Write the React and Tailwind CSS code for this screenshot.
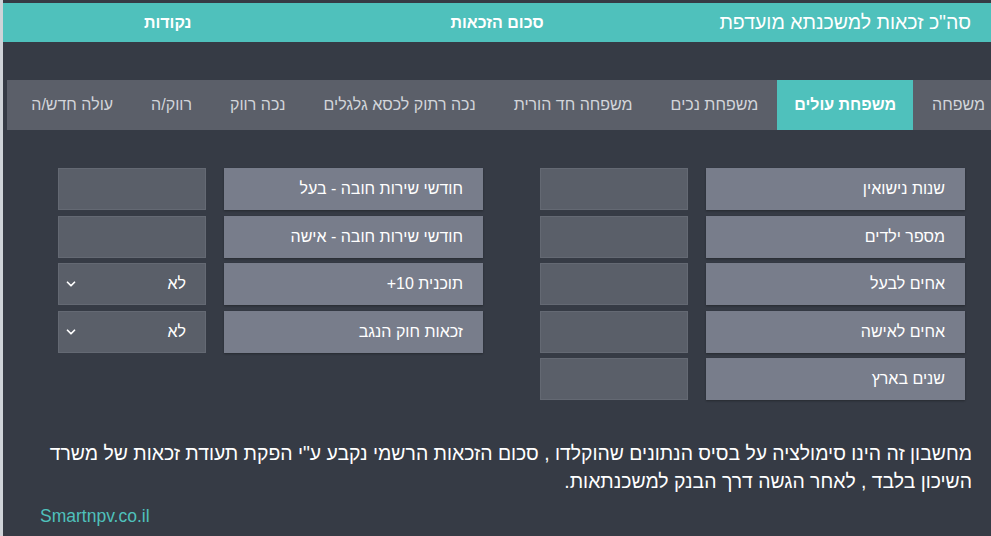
import { ChevronDown } from "lucide-react";

const tabs = [
  "משפחה",
  "משפחת עולים",
  "משפחת נכים",
  "משפחה חד הורית",
  "נכה רתוק לכסא גלגלים",
  "נכה רווק",
  "רווק/ה",
  "עולה חדש/ה",
];

const rightRows = ["שנות נישואין", "מספר ילדים", "אחים לבעל", "אחים לאישה", "שנים בארץ"];

const leftRows = [
  { label: "חודשי שירות חובה - בעל" },
  { label: "חודשי שירות חובה - אישה" },
  { label: "תוכנית 10+", select: true },
  { label: "זכאות חוק הנגב", select: true },
];

function Row({ label, select }) {
  return (
    <div className="flex h-[42px] items-center gap-[18px]">
      <div className="flex h-full w-[259px] items-center bg-[#787d8b] pr-5 text-[16px] text-white shadow-[0_1px_2px_rgba(0,0,0,0.3)]">
        {label}
      </div>
      {select ? (
        <div className="flex h-full w-[148px] items-center justify-between border border-[#646973] bg-[#5a5f69] pl-[5px] pr-[19px] text-[16px] text-white">
          <span>לא</span>
          <ChevronDown size={14} strokeWidth={3} className="text-white" />
        </div>
      ) : (
        <div className="h-full w-[148px] border border-[#646973] bg-[#5a5f69]" />
      )}
    </div>
  );
}

export default function App() {
  return (
    <div
      dir="rtl"
      className="h-[536px] w-[991px] overflow-hidden border-l-[3px] border-[#cfd3d8] bg-[#363b45] pt-[3px] font-['Liberation_Sans',Arial,sans-serif]"
    >
      <div className="grid h-[39px] grid-cols-3 items-center bg-[#4fc1bc] text-white">
        <div className="pr-[20px] text-[19.5px]">סה"כ זכאות למשכנתא מועדפת</div>
        <div className="text-center text-[16px] font-bold">סכום הזכאות</div>
        <div className="text-center text-[16px] font-bold">נקודות</div>
      </div>

      <div className="ml-[4px] mt-[38px] flex h-[50px] items-stretch overflow-hidden bg-[#5b5f69]">
        {tabs.map((t, i) => (
          <div
            key={t}
            className={
              i === 1
                ? "flex shrink-0 items-center bg-[#4fc1bc] px-[17px] text-[16px] font-bold text-white"
                : i === 0
                ? "flex shrink-0 items-center pl-[19px] pr-[6px] text-[16px] text-[#d2d5da]"
                : "flex shrink-0 items-center px-[19px] text-[16px] text-[#d2d5da]"
            }
          >
            {t}
          </div>
        ))}
      </div>

      <div className="mt-[38px] flex items-start gap-[57px] pr-[26px]">
        <div className="flex flex-col gap-[5.5px]">
          {rightRows.map((r) => (
            <Row key={r} label={r} />
          ))}
        </div>
        <div className="flex flex-col gap-[5.5px]">
          {leftRows.map((r) => (
            <Row key={r.label} label={r.label} select={r.select} />
          ))}
        </div>
      </div>

      <div className="mt-[39px] pl-[37px] pr-[19px] text-white">
        <p className="text-[19.4px] leading-[28px]">
          מחשבון זה הינו סימולציה על בסיס הנתונים שהוקלדו , סכום הזכאות הרשמי נקבע ע"י הפקת תעודת זכאות של משרד
          <br />
          השיכון בלבד , לאחר הגשה דרך הבנק למשכנתאות.
        </p>
        <p className="mt-[9px] text-[17.5px] leading-[24px] text-[#4fc1bc]" dir="ltr">
          Smartnpv.co.il
        </p>
      </div>
    </div>
  );
}
